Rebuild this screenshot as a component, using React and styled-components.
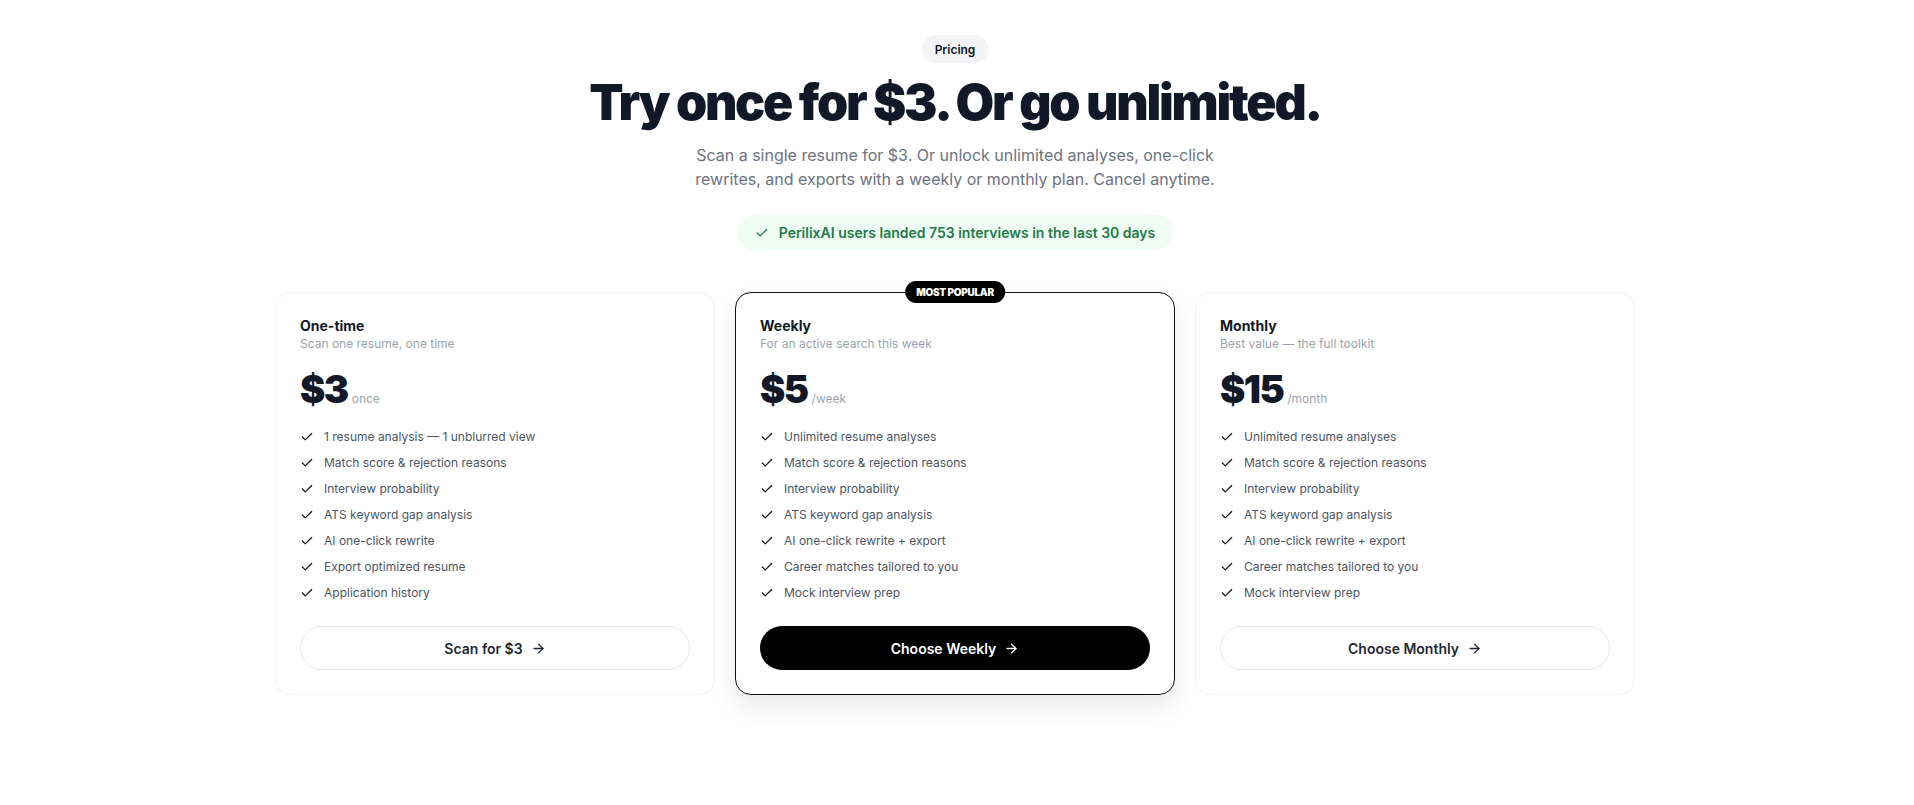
import React from "react"
import styled, { createGlobalStyle } from "styled-components"
import { Check, ArrowRight } from "lucide-react"

const GlobalStyle = createGlobalStyle`
    * { box-sizing: border-box; }
    body {
        margin: 0;
        background: #ffffff;
        font-family: Inter, "Noto Sans", Arial, sans-serif;
        color: #111827;
        -webkit-font-smoothing: antialiased;
    }
`

const Section = styled.section`
    padding: 35px 4px 80px 0;
    display: flex;
    flex-direction: column;
    align-items: center;
`

const Eyebrow = styled.span`
    display: inline-flex;
    align-items: center;
    height: 28px;
    padding: 0 13px;
    border-radius: 999px;
    background: #f3f4f6;
    font-size: 12px;
    font-weight: 600;
    color: #111827;
`

const Heading = styled.h1`
    margin: 12px 0 0;
    font-size: 50px;
    line-height: 55px;
    font-weight: 900;
    letter-spacing: -0.045em;
    color: #111827;
    text-align: center;
`

const Lead = styled.p`
    margin: 13px 0 0;
    max-width: 560px;
    font-size: 16px;
    line-height: 24px;
    color: #6b7280;
    text-align: center;
`

const Proof = styled.div`
    margin-top: 24px;
    height: 35px;
    padding: 0 18px;
    display: inline-flex;
    align-items: center;
    gap: 10px;
    border-radius: 999px;
    background: #f0fdf4;
    color: #237a48;
    font-size: 14px;
    font-weight: 600;
`

const Grid = styled.div`
    margin-top: 42px;
    width: 1360px;
    display: grid;
    grid-template-columns: repeat(3, 1fr);
    gap: 20px;
`

const Card = styled.div`
    position: relative;
    padding: 24px;
    border-radius: 16px;
    background: #fff;
    border: ${p => (p.$featured ? "1.5px solid #111111" : "1px solid #f1f2f4")};
    box-shadow: ${p => (p.$featured ? "0 12px 28px rgba(0,0,0,0.09)" : "0 1px 2px rgba(0,0,0,0.02)")};
    display: flex;
    flex-direction: column;
`

const Badge = styled.span`
    position: absolute;
    top: -12px;
    left: 50%;
    transform: translateX(-50%);
    height: 22px;
    padding: 0 11px;
    display: inline-flex;
    align-items: center;
    border-radius: 999px;
    background: #000;
    color: #fff;
    font-size: 10px;
    font-weight: 900;
    letter-spacing: -0.03em;
    white-space: nowrap;
`

const PlanName = styled.h3`
    margin: 0;
    font-size: 14px;
    line-height: 18px;
    font-weight: 700;
    color: #111827;
`

const PlanNote = styled.p`
    margin: 0;
    font-size: 12px;
    line-height: 18px;
    color: #9ca3af;
`

const PriceRow = styled.div`
    margin-top: 18px;
    display: flex;
    align-items: baseline;
    gap: 4px;
`

const Amount = styled.span`
    font-size: 38px;
    line-height: 36px;
    font-weight: 900;
    letter-spacing: -0.04em;
    color: #111827;
`

const Per = styled.span`
    font-size: 12px;
    color: #9ca3af;
`

const Features = styled.ul`
    list-style: none;
    margin: 20px 0 0;
    padding: 0;
    display: flex;
    flex-direction: column;
    gap: 6px;
`

const Feature = styled.li`
    display: flex;
    align-items: center;
    gap: 10px;
    font-size: 12px;
    line-height: 20px;
    color: #4b5563;

    svg { flex-shrink: 0; color: #111827; }
`

const Button = styled.button`
    margin-top: 23px;
    height: 44px;
    width: 100%;
    border-radius: 999px;
    display: flex;
    align-items: center;
    justify-content: center;
    gap: 8px;
    font-family: inherit;
    font-size: 14px;
    font-weight: 600;
    cursor: pointer;
    background: ${p => (p.$dark ? "#000" : "#fff")};
    color: ${p => (p.$dark ? "#fff" : "#1f2937")};
    border: ${p => (p.$dark ? "none" : "1px solid #e5e7eb")};
`

const plans = [
    {
        name: "One-time",
        note: "Scan one resume, one time",
        price: "$3",
        per: "once",
        cta: "Scan for $3",
        features: [
            "1 resume analysis — 1 unblurred view",
            "Match score & rejection reasons",
            "Interview probability",
            "ATS keyword gap analysis",
            "AI one-click rewrite",
            "Export optimized resume",
            "Application history",
        ],
    },
    {
        name: "Weekly",
        note: "For an active search this week",
        price: "$5",
        per: "/week",
        cta: "Choose Weekly",
        featured: true,
        features: [
            "Unlimited resume analyses",
            "Match score & rejection reasons",
            "Interview probability",
            "ATS keyword gap analysis",
            "AI one-click rewrite + export",
            "Career matches tailored to you",
            "Mock interview prep",
        ],
    },
    {
        name: "Monthly",
        note: "Best value — the full toolkit",
        price: "$15",
        per: "/month",
        cta: "Choose Monthly",
        features: [
            "Unlimited resume analyses",
            "Match score & rejection reasons",
            "Interview probability",
            "ATS keyword gap analysis",
            "AI one-click rewrite + export",
            "Career matches tailored to you",
            "Mock interview prep",
        ],
    },
]

function PlanCard({ plan }) {
    return (
        <Card $featured={plan.featured}>
            {plan.featured && <Badge>MOST POPULAR</Badge>}
            <PlanName>{plan.name}</PlanName>
            <PlanNote>{plan.note}</PlanNote>
            <PriceRow>
                <Amount>{plan.price}</Amount>
                <Per>{plan.per}</Per>
            </PriceRow>
            <Features>
                {plan.features.map(f => (
                    <Feature key={f}>
                        <Check size={14} strokeWidth={2.2} />
                        {f}
                    </Feature>
                ))}
            </Features>
            <Button $dark={plan.featured}>
                {plan.cta}
                <ArrowRight size={15} strokeWidth={2.2} />
            </Button>
        </Card>
    )
}

export default function App() {
    return (
        <>
            <GlobalStyle />
            <Section>
                <Eyebrow>Pricing</Eyebrow>
                <Heading>Try once for $3. Or go unlimited.</Heading>
                <Lead>
                    Scan a single resume for $3. Or unlock unlimited analyses, one-click
                    rewrites, and exports with a weekly or monthly plan. Cancel anytime.
                </Lead>
                <Proof>
                    <Check size={14} strokeWidth={2.2} />
                    PerilixAI users landed 753 interviews in the last 30 days
                </Proof>
                <Grid>
                    {plans.map(p => (
                        <PlanCard key={p.name} plan={p} />
                    ))}
                </Grid>
            </Section>
        </>
    )
}
